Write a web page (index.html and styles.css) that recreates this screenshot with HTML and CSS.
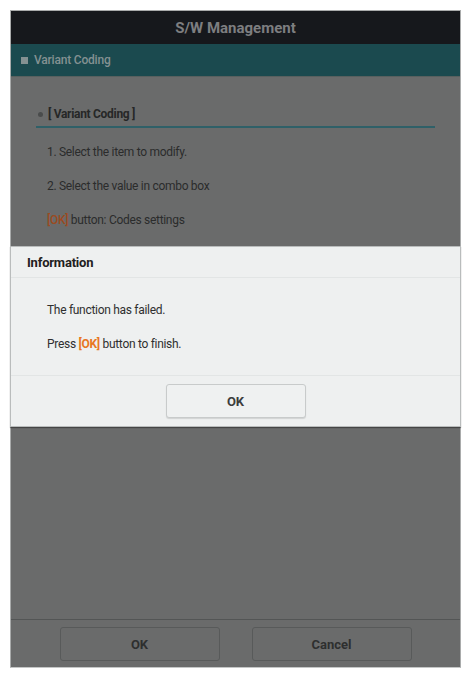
FILE: index.html
```html
<!DOCTYPE html>
<html lang="en">
<head>
  <meta charset="UTF-8" />
  <meta name="viewport" content="width=device-width, initial-scale=1.0"/>
  <title>S/W Management</title>
  <link rel="stylesheet" href="styles.css">
</head>
<body>

  <div class="device">
    <header class="title-bar">S/W Management</header>
    <div class="section-bar"><span class="square"></span>Variant Coding</div>

    <main class="content">
      <div class="guide">
        <h2 class="guide-title"><span class="dot"></span>[ Variant Coding ]</h2>
        <ul class="steps">
          <li>1. Select the item to modify.</li>
          <li>2. Select the value in combo box</li>
          <li><span class="key-dim">[OK]</span> button: Codes settings</li>
        </ul>
      </div>
    </main>

    <footer class="actions">
      <button class="action-btn">OK</button>
      <button class="action-btn">Cancel</button>
    </footer>

    <!-- popup over the dimmed screen -->
    <div class="dialog">
      <div class="dialog-head">Information</div>
      <div class="dialog-body">
        <p>The function has failed.</p>
        <p>Press <span class="key">[OK]</span> button to finish.</p>
      </div>
      <div class="dialog-foot">
        <button class="dialog-btn">OK</button>
      </div>
    </div>
  </div>

</body>
</html>
```

FILE: styles.css
```css
* { margin: 0; padding: 0; box-sizing: border-box; }
body {
  background: #fff;
  font-family: Roboto, 'Liberation Sans', sans-serif;
  padding: 10px 0 0 10px;
}

.device {
  position: relative;
  width: 451px;
  height: 658px;
  display: flex;
  flex-direction: column;
  background: #6a6b6b;
  border: 1px solid #a9abab;
  border-bottom-color: #c4c6c6;
}

.title-bar {
  height: 33px;
  background: #16181c;
  color: #7d7e80;
  font-size: 15px;
  font-weight: 700;
  display: flex;
  align-items: center;
  justify-content: center;
}

.section-bar {
  height: 33px;
  background: #1b4a4f;
  color: #849192;
  font-size: 12px;
  font-weight: 500;
  letter-spacing: -0.2px;
  display: flex;
  align-items: center;
  padding-left: 10px;
  border-bottom: 1px solid #58605f;
}

.square {
  width: 7px;
  height: 7px;
  background: #849192;
  margin-right: 6px;
}

.content {
  flex: 1;
  padding: 28px 25px 0 25px;
}

.guide-title {
  display: flex;
  align-items: center;
  font-size: 12px;
  font-weight: 700;
  letter-spacing: -0.3px;
  line-height: 18px;
  color: #262727;
  padding-bottom: 3px;
  border-bottom: 2px solid #2f6068;
}

.dot {
  width: 5px;
  height: 5px;
  border-radius: 50%;
  background: #4a4c4c;
  margin: 0 5px 0 2px;
}

.steps {
  list-style: none;
  padding: 15px 0 0 11px;
  font-size: 12px;
  letter-spacing: -0.3px;
  line-height: 18px;
  color: #2b2c2c;
}

.steps li { margin-bottom: 16px; }

.key-dim { color: #9c4a20; font-weight: 500; }

.actions {
  height: 48px;
  border-top: 1px solid #535555;
  display: flex;
  justify-content: center;
  gap: 32px;
  padding-top: 7px;
}

.action-btn {
  width: 160px;
  height: 34px;
  background: #6a6b6b;
  border: 1px solid #585a5a;
  border-radius: 3px;
  color: #2e2f2f;
  font-family: inherit;
  font-size: 13px;
  font-weight: 700;
}

.dialog {
  position: absolute;
  top: 235px;
  left: -1px;
  right: -1px;
  background: #eef0f0;
  border: 1px solid #b9bcbc;
  box-shadow: 0 1px 1px rgba(0, 0, 0, 0.35);
}

.dialog-head {
  height: 31px;
  padding-left: 16px;
  display: flex;
  align-items: center;
  font-size: 13px;
  font-weight: 700;
  letter-spacing: -0.2px;
  color: #1f2020;
  border-bottom: 1px solid #e2e5e5;
}

.dialog-body {
  padding: 23px 0 22px 36px;
  font-size: 12px;
  letter-spacing: -0.3px;
  line-height: 18px;
  color: #2e2f2f;
  border-bottom: 1px solid #e2e5e5;
}

.dialog-body p + p { margin-top: 16px; }

.key { color: #e8771f; font-weight: 700; }

.dialog-foot {
  display: flex;
  justify-content: center;
  padding: 8px 0 8px;
}

.dialog-btn {
  width: 140px;
  height: 34px;
  background: #eff1f1;
  border: 1px solid #c8cbcb;
  border-radius: 3px;
  box-shadow: 0 1px 1px rgba(0, 0, 0, 0.12);
  color: #3c3d3d;
  font-family: inherit;
  font-size: 13px;
  font-weight: 700;
}
```
